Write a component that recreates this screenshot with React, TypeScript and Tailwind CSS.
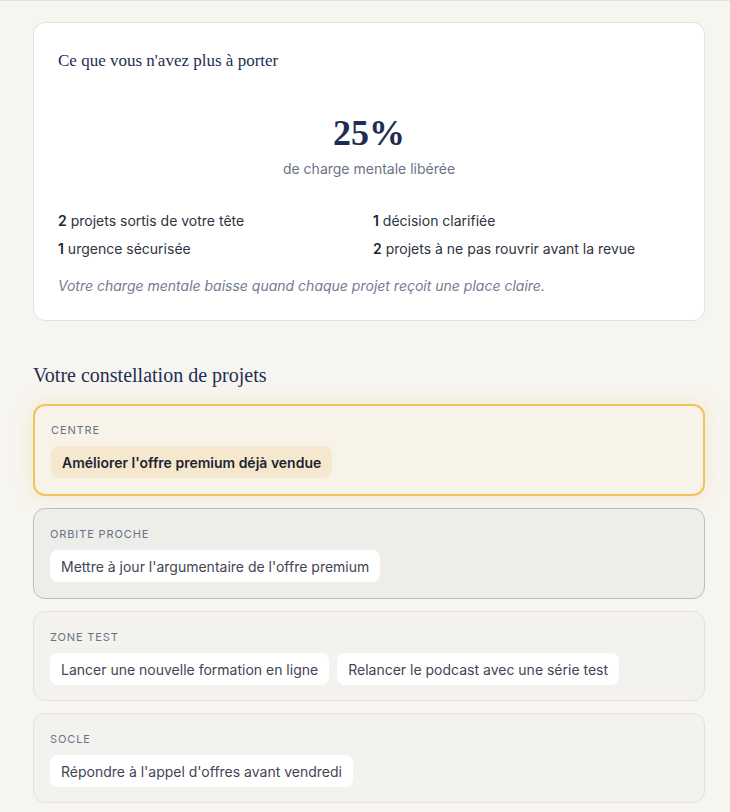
const serif = "font-['Liberation_Serif',_'DejaVu_Serif',_serif]";

type Zone = {
  label: string;
  items: string[];
  tone: 'center' | 'near' | 'plain';
};

const zones: Zone[] = [
  { label: 'Centre', items: ["Améliorer l'offre premium déjà vendue"], tone: 'center' },
  { label: 'Orbite proche', items: ["Mettre à jour l'argumentaire de l'offre premium"], tone: 'near' },
  {
    label: 'Zone test',
    items: ['Lancer une nouvelle formation en ligne', 'Relancer le podcast avec une série test'],
    tone: 'plain',
  },
  { label: 'Socle', items: ["Répondre à l'appel d'offres avant vendredi"], tone: 'plain' },
];

const stats = [
  { n: '2', text: 'projets sortis de votre tête' },
  { n: '1', text: 'décision clarifiée' },
  { n: '1', text: 'urgence sécurisée' },
  { n: '2', text: 'projets à ne pas rouvrir avant la revue' },
];

function ZoneCard({ zone }: { zone: Zone }) {
  const box =
    zone.tone === 'center'
      ? 'border-2 border-[#f2c25e] bg-[#f8f3e9] shadow-[0_0_18px_rgba(242,194,94,0.25)] pt-4 pb-4'
      : zone.tone === 'near'
        ? 'border border-[#b9bcc7] bg-[#edede9] pt-[17px] pb-4'
        : 'border border-[#e4e1da] bg-[#f3f2ee] pt-[17px] pb-[15px]';
  const chip =
    zone.tone === 'center'
      ? 'bg-[#f5e8cf] font-semibold text-[#1f2430]'
      : 'bg-white text-[#3f4554]';

  return (
    <div className={`rounded-xl px-4 ${box}`}>
      <div className="text-[11px] uppercase tracking-[0.08em] text-[#6b7286] leading-4">{zone.label}</div>
      <div className="mt-2 flex flex-wrap gap-2">
        {zone.items.map((item) => (
          <span key={item} className={`rounded-lg px-[11px] h-8 flex items-center text-[14px] ${chip}`}>
            {item}
          </span>
        ))}
      </div>
    </div>
  );
}

export default function App() {
  return (
    <div className="min-h-screen bg-[#f7f5f0] border-t border-[#e3e1dc] font-['Inter',_'Noto_Sans',_sans-serif]">
      <div className="pl-[33px] pr-[25px] pt-[21px] pb-6">
        {/* résumé de la charge mentale */}
        <div className="rounded-xl border border-[#e4e2dd] bg-white px-6 pt-[26px] pb-6">
          <h2 className={`${serif} text-[17px] text-[#1f2d52] leading-6`}>Ce que vous n'avez plus à porter</h2>

          <div className="mt-[38px] flex flex-col items-center">
            <div className={`${serif} text-[36px] leading-[44px] font-bold text-[#1f2d52]`}>25%</div>
            <div className="text-[14px] text-[#6b7389] leading-5 mt-1">de charge mentale libérée</div>
          </div>

          <div className="mt-[32px] grid grid-cols-2 gap-x-2 gap-y-2 text-[14px] text-[#2e3340] leading-5">
            {stats.map((s) => (
              <div key={s.text}>
                <span className="font-semibold text-[#1f2430]">{s.n}</span> {s.text}
              </div>
            ))}
          </div>

          <p className="mt-[17px] text-[14px] italic text-[#737b90] leading-5">
            Votre charge mentale baisse quand chaque projet reçoit une place claire.
          </p>
        </div>

        <h3 className={`${serif} mt-10 text-[20px] text-[#1f2d52] leading-7`}>Votre constellation de projets</h3>

        <div className="mt-[15px] flex flex-col gap-3">
          {zones.map((z) => (
            <ZoneCard key={z.label} zone={z} />
          ))}
        </div>
      </div>
    </div>
  );
}
